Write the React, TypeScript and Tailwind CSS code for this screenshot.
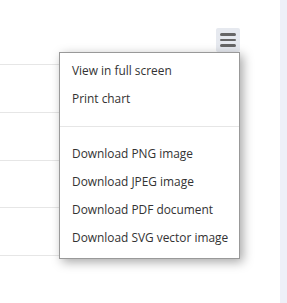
export default function App() {
  const items = ["View in full screen", "Print chart"];
  const downloads = [
    "Download PNG image",
    "Download JPEG image",
    "Download PDF document",
    "Download SVG vector image",
  ];

  return (
    <div className="flex w-[287px] h-[303px] bg-white overflow-hidden" style={{ fontFamily: '"Open Sans", sans-serif' }}>
      {/* Chart area */}
      <div className="relative w-[280px] h-full bg-white">
        <div className="pt-[64px] w-[240px]">
          {[0, 1, 2, 3].map((i) => (
            <div key={i} className="h-[47.75px] border-t border-[#e6e6e6]" />
          ))}
          <div className="border-t border-[#e6e6e6]" />
        </div>

        {/* Context button */}
        <button className="absolute left-[216px] top-[28px] w-[24px] h-[24px] bg-[#e6e9ef] flex flex-col items-center justify-center gap-[3px] rounded-[2px]">
          <span className="block w-[16px] h-[2.5px] bg-[#666] rounded-full" />
          <span className="block w-[16px] h-[2.5px] bg-[#666] rounded-full" />
          <span className="block w-[16px] h-[2.5px] bg-[#666] rounded-full" />
        </button>

        {/* Context menu */}
        <div className="absolute left-[59px] top-[52px] w-[181px] bg-white border border-[#999] shadow-[3px_3px_10px_rgba(0,0,0,0.35)] pt-[4px] pb-[6px]">
          {items.map((t) => (
            <div key={t} className="h-[28px] flex items-center px-[12px] text-[11.9px] text-[#333] whitespace-nowrap">
              {t}
            </div>
          ))}
          <div className="my-[13px] border-t border-[#e6e6e6]" />
          {downloads.map((t) => (
            <div key={t} className="h-[28px] flex items-center px-[12px] text-[11.9px] text-[#333] whitespace-nowrap">
              {t}
            </div>
          ))}
        </div>
      </div>

      {/* Right strip */}
      <div className="flex-1 bg-[#eef0f8]" />
    </div>
  );
}
